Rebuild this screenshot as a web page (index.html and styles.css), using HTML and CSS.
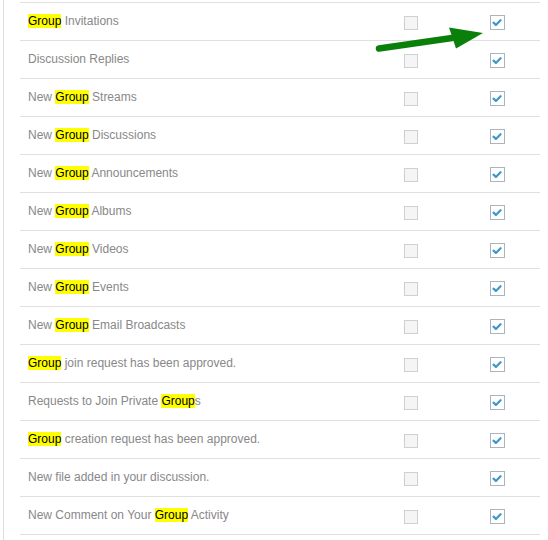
FILE: index.html
```html
<!DOCTYPE html>
<html lang="en">
  <head>
    <meta charset="UTF-8" />
    <title>Group Notification Settings</title>
    <link rel="stylesheet" href="styles.css">
  </head>
  <body>
    <div class="panel">
      <div class="settings">
        <div class="row">
          <div class="label"><span class="hl">Group</span> Invitations</div>
          <div class="cell"><span class="box"></span></div>
          <div class="cell"><span class="box checked"><svg viewBox="0 0 14 14"><path d="M3.2 7.2 L5.8 9.6 L10.8 4.6" /></svg></span></div>
        </div>
        <div class="row">
          <div class="label">Discussion Replies</div>
          <div class="cell"><span class="box"></span></div>
          <div class="cell"><span class="box checked"><svg viewBox="0 0 14 14"><path d="M3.2 7.2 L5.8 9.6 L10.8 4.6" /></svg></span></div>
        </div>
        <div class="row">
          <div class="label">New <span class="hl">Group</span> Streams</div>
          <div class="cell"><span class="box"></span></div>
          <div class="cell"><span class="box checked"><svg viewBox="0 0 14 14"><path d="M3.2 7.2 L5.8 9.6 L10.8 4.6" /></svg></span></div>
        </div>
        <div class="row">
          <div class="label">New <span class="hl">Group</span> Discussions</div>
          <div class="cell"><span class="box"></span></div>
          <div class="cell"><span class="box checked"><svg viewBox="0 0 14 14"><path d="M3.2 7.2 L5.8 9.6 L10.8 4.6" /></svg></span></div>
        </div>
        <div class="row">
          <div class="label">New <span class="hl">Group</span> Announcements</div>
          <div class="cell"><span class="box"></span></div>
          <div class="cell"><span class="box checked"><svg viewBox="0 0 14 14"><path d="M3.2 7.2 L5.8 9.6 L10.8 4.6" /></svg></span></div>
        </div>
        <div class="row">
          <div class="label">New <span class="hl">Group</span> Albums</div>
          <div class="cell"><span class="box"></span></div>
          <div class="cell"><span class="box checked"><svg viewBox="0 0 14 14"><path d="M3.2 7.2 L5.8 9.6 L10.8 4.6" /></svg></span></div>
        </div>
        <div class="row">
          <div class="label">New <span class="hl">Group</span> Videos</div>
          <div class="cell"><span class="box"></span></div>
          <div class="cell"><span class="box checked"><svg viewBox="0 0 14 14"><path d="M3.2 7.2 L5.8 9.6 L10.8 4.6" /></svg></span></div>
        </div>
        <div class="row">
          <div class="label">New <span class="hl">Group</span> Events</div>
          <div class="cell"><span class="box"></span></div>
          <div class="cell"><span class="box checked"><svg viewBox="0 0 14 14"><path d="M3.2 7.2 L5.8 9.6 L10.8 4.6" /></svg></span></div>
        </div>
        <div class="row">
          <div class="label">New <span class="hl">Group</span> Email Broadcasts</div>
          <div class="cell"><span class="box"></span></div>
          <div class="cell"><span class="box checked"><svg viewBox="0 0 14 14"><path d="M3.2 7.2 L5.8 9.6 L10.8 4.6" /></svg></span></div>
        </div>
        <div class="row">
          <div class="label"><span class="hl">Group</span> join request has been approved.</div>
          <div class="cell"><span class="box"></span></div>
          <div class="cell"><span class="box checked"><svg viewBox="0 0 14 14"><path d="M3.2 7.2 L5.8 9.6 L10.8 4.6" /></svg></span></div>
        </div>
        <div class="row">
          <div class="label">Requests to Join Private <span class="hl">Group</span>s</div>
          <div class="cell"><span class="box"></span></div>
          <div class="cell"><span class="box checked"><svg viewBox="0 0 14 14"><path d="M3.2 7.2 L5.8 9.6 L10.8 4.6" /></svg></span></div>
        </div>
        <div class="row">
          <div class="label"><span class="hl">Group</span> creation request has been approved.</div>
          <div class="cell"><span class="box"></span></div>
          <div class="cell"><span class="box checked"><svg viewBox="0 0 14 14"><path d="M3.2 7.2 L5.8 9.6 L10.8 4.6" /></svg></span></div>
        </div>
        <div class="row">
          <div class="label">New file added in your discussion.</div>
          <div class="cell"><span class="box"></span></div>
          <div class="cell"><span class="box checked"><svg viewBox="0 0 14 14"><path d="M3.2 7.2 L5.8 9.6 L10.8 4.6" /></svg></span></div>
        </div>
        <div class="row">
          <div class="label">New Comment on Your <span class="hl">Group</span> Activity</div>
          <div class="cell"><span class="box"></span></div>
          <div class="cell"><span class="box checked"><svg viewBox="0 0 14 14"><path d="M3.2 7.2 L5.8 9.6 L10.8 4.6" /></svg></span></div>
        </div>
      </div>
    </div>
    <!-- annotation arrow drawn over the table -->
    <svg class="arrow" width="548" height="60" viewBox="0 0 548 60">
      <line x1="379" y1="48.5" x2="452" y2="38" />
      <polygon points="449,27.5 483,33 456,48.5" />
    </svg>
  </body>
</html>
```

FILE: styles.css
```css
body {
  margin: 0;
  font-family: "Liberation Sans", Arial, sans-serif;
  font-size: 12px;
  color: #888;
  background-color: #fff;
  position: relative;
  height: 540px;
  overflow: hidden;
}
.panel {
  margin-left: 3px;
  height: 100%;
  border-left: 1px solid #ddd;
  padding: 2px 8px 0 16px;
}
.settings {
  width: 520px;
  border-bottom: 1px solid #e0e0e0;
}
.row {
  display: grid;
  grid-template-columns: 1fr 86px 86px;
  align-items: center;
  height: 37px;
  border-top: 1px solid #e0e0e0;
}
.label {
  padding-left: 8px;
  padding-bottom: 1px;
}
.hl {
  background-color: #ffff00;
  color: #000;
}
.cell {
  display: flex;
  justify-content: center;
  padding-top: 2px;
}
.cell:last-child {
  padding-top: 1px;
}
.box {
  width: 12px;
  height: 12px;
  border: 1px solid #d0d0d0;
  background-color: #f5f5f5;
  display: block;
  margin-right: 1px;
}
.box.checked {
  width: 13px;
  height: 13px;
  margin-right: 0;
  border-color: #a9b4bf;
  background-color: #fff;
}
.box svg {
  display: block;
  width: 13px;
  height: 13px;
}
.box svg path {
  fill: none;
  stroke: #3f97c9;
  stroke-width: 2.4;
  stroke-linecap: round;
  stroke-linejoin: round;
  transform: translate(-0.5px, 0);
}
.arrow {
  position: absolute;
  left: 0;
  top: 0;
}
.arrow line {
  stroke: #0a800a;
  stroke-width: 6.5;
  stroke-linecap: round;
}
.arrow polygon {
  fill: #0a800a;
}
```
